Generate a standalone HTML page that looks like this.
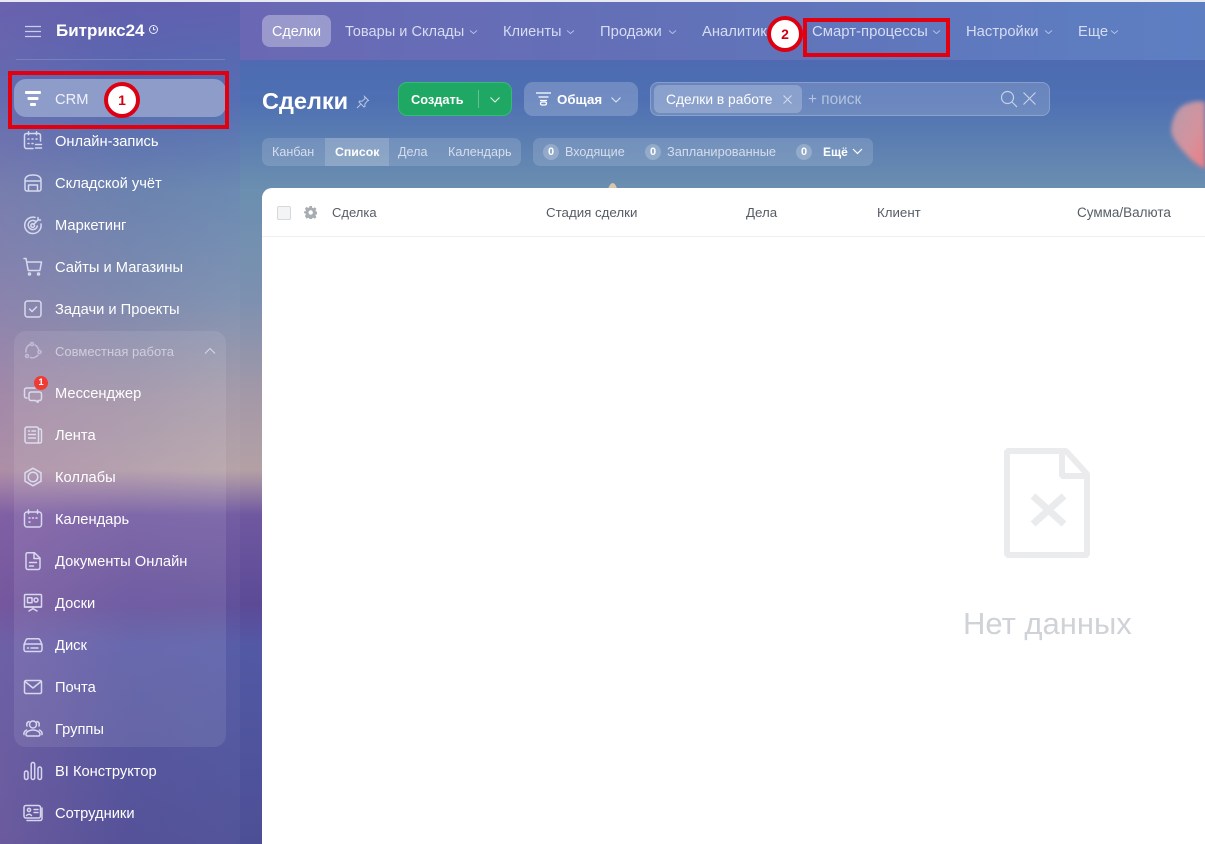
<!DOCTYPE html>
<html lang="ru"><head><meta charset="utf-8"><title>Сделки</title>
<style>
*{box-sizing:border-box}
html,body{margin:0;padding:0;width:1205px;height:844px;overflow:hidden;background:#5a62ab;font-family:"Liberation Sans","Noto Sans CJK SC",sans-serif}
.a{position:absolute}
#bg{left:0;top:0;width:1205px;height:844px;background:linear-gradient(180deg,#5f5fae 0,#4d6cb2 70px,#4e70b3 100px,#6b8fb0 190px,#7d90b0 300px,#a599a7 400px,#b3a0a5 470px,#a48ea4 482px,#6f58a0 515px,#5c4a97 605px,#5358a5 645px,#5056a0 700px,#4d4f96 844px)}
#sb{left:0;top:0;width:240px;height:844px;background:linear-gradient(90deg,rgba(160,110,170,.36) 0,rgba(140,100,170,.12) 55%,rgba(255,255,255,.03) 100%);}
#sb2{left:0;top:0;width:240px;height:844px;background:linear-gradient(180deg,rgba(95,95,175,.55) 0,rgba(90,100,175,.3) 120px,rgba(0,0,0,0) 300px,rgba(0,0,0,0) 844px)}
#tb{left:240px;top:0;width:965px;height:60px;background:linear-gradient(90deg,#6a68b4 0,#6271b8 45%,#5d7fc2 100%)}
#topl{left:0;top:0;width:1205px;height:2px;background:#e9e9f3}
.it{position:absolute;left:55px;color:#fff;font-size:14.7px;line-height:20px;height:20px;white-space:nowrap;margin-top:1px}
.ic{position:absolute;left:23px;width:20px;height:20px;fill:none;stroke:#dfe2f4;stroke-width:1.5;stroke-linecap:round;stroke-linejoin:round;opacity:.92}
.tn{position:absolute;top:22px;height:20px;line-height:20px;font-size:14.8px;color:#d6dcf2;white-space:nowrap}
.ch{position:absolute;top:28px;width:9px;height:7px;fill:none;stroke:#b8c2e4;stroke-width:.9}
.seg{position:absolute;top:142px;height:20px;line-height:20px;font-size:12.6px;color:#d6deee;white-space:nowrap}
.cnt{position:absolute;top:144px;width:16px;height:16px;border-radius:50%;background:rgba(255,255,255,.22);color:#fff;font-size:11px;font-weight:bold;line-height:16px;text-align:center}
.th{position:absolute;top:203px;height:20px;line-height:20px;font-size:13.3px;color:#565c66;white-space:nowrap}
.red{position:absolute;border:4px solid #e2000f}
.num{position:absolute;width:36px;height:36px;border-radius:50%;background:#fff;border:4px solid #dc0012;color:#d00012;font-weight:bold;font-size:14px;line-height:28px;text-align:center}
</style></head><body>
<div class="a" id="bg"></div>
<svg class="a" style="left:1165px;top:95px;filter:blur(2px)" width="40" height="80"><defs><linearGradient id="bl" x1="0" y1="0" x2="1" y2="1"><stop offset="0" stop-color="#b79bae"/><stop offset=".6" stop-color="#d4929c"/><stop offset="1" stop-color="#ee7c82"/></linearGradient></defs><path fill="url(#bl)" d="M6 36Q8 12 24 8Q33 5 40 7V74Q28 68 20 58Q8 46 6 36Z"/></svg>
<svg class="a" style="left:605px;top:182px" width="14" height="7"><path fill="#d8c7ac" d="M3 7Q5 1 8 1Q11 2 12 7Z"/></svg>
<div class="a" id="sb"></div>
<div class="a" id="sb2"></div>
<div class="a" id="tb"></div>
<div class="a" id="topl"></div>

<svg class="a" style="left:25px;top:25px" width="17" height="13" fill="none" stroke="#c9cfe9" stroke-width="1.3"><path d="M0 1.5h16M0 6.5h16M0 11.5h16"/></svg>
<div class="a" style="left:56px;top:20px;color:#fff;font-weight:bold;font-size:17px;line-height:22px">Битрикс24</div>
<svg class="a" style="left:148px;top:24px" width="11" height="11" fill="none" stroke="#e8ebf8" stroke-width="1"><circle cx="5.5" cy="5.5" r="4"/><path d="M5.5 3v2.7h2"/></svg>
<div class="a" style="left:16px;top:59px;width:209px;height:1px;background:rgba(255,255,255,.16)"></div>

<div class="a" style="left:14px;top:79px;width:212px;height:38px;border-radius:12px;background:#8e9cc9"></div>
<div class="a" style="left:14px;top:331px;width:212px;height:416px;border-radius:12px;background:rgba(255,255,255,.09)"></div>

<svg class="a" style="left:24px;top:90px" width="18" height="17" fill="#fff"><rect x="1" y="1" width="16" height="3" rx="1"/><rect x="3.5" y="7" width="11" height="3" rx="1"/><rect x="6" y="13" width="6" height="3" rx="1"/></svg>
<div class="it" style="top:89px;color:#f0f2fb">CRM</div>

<svg class="ic" style="top:131px" viewBox="0 0 20 20"><path d="M10 17.500H3.500a2 2 0 0 1-2-2V4.500a2 2 0 0 1 2-2h12a2 2 0 0 1 2 2V10M5.500.8v3M13.500.8v3M5 8h1M9 8h1M13 8h1M5 12.500h1M9 12.500h1M12.500 13.500h6M12.500 17h6"/></svg>
<div class="it" style="top:131px">Онлайн-запись</div>

<svg class="ic" style="top:173px" viewBox="0 0 20 20"><path d="M2 16V7.500Q2 2 10 2t8 5.500V16a2 2 0 0 1-2 2H4a2 2 0 0 1-2-2ZM2 8h16M5.500 18v-6h9v6M5.500 12h9"/></svg>
<div class="it" style="top:173px">Складской учёт</div>

<svg class="ic" style="top:215px" viewBox="0 0 20 20"><path d="M12 2.400A8.200 8.200 0 1 0 18 9M13 6.700A4.600 4.600 0 1 0 14.300 11M10 8.800 a1.800 1.800 0 1 0 1.400 1.400M10.500 9.500l5-5M15 2.500v2.500h2.500"/></svg>
<div class="it" style="top:215px">Маркетинг</div>

<svg class="ic" style="top:257px" viewBox="0 0 20 20"><path d="M1 1.500h2l2.200 12h11.500M3.700 5H18.500l-1.500 8"/><circle cx="6.500" cy="17" r="1"/><circle cx="15.500" cy="17" r="1"/></svg>
<div class="it" style="top:257px">Сайты и Магазины</div>

<svg class="ic" style="top:299px" viewBox="0 0 20 20"><rect x="2" y="2" width="16" height="16" rx="2.500"/><path d="M6.500 10l2.500 2.500 4.500-4.500"/></svg>
<div class="it" style="top:299px">Задачи и Проекты</div>

<svg class="ic" style="top:341px;opacity:.55" viewBox="0 0 20 20"><circle cx="9" cy="3" r="1.500"/><circle cx="4" cy="15" r="1.500"/><circle cx="16.500" cy="11" r="1.500"/><path d="M6.500 3.700A7 7 0 0 0 3 11M12 4a7 7 0 0 1 3.500 4.500M15 14a7 7 0 0 1-7.500 2.500"/></svg>
<div class="it" style="top:341px;font-size:13px;color:#d0cddd">Совместная работа</div>
<svg class="a" style="left:204px;top:347px" width="12" height="8" fill="none" stroke="#d8d6e4" stroke-width="1.1"><path d="M1 6.500 6 1.500l5 5"/></svg>

<svg class="ic" style="top:383px" viewBox="0 0 20 20"><path d="M4 15H3.500a2 2 0 0 1-2-2V7a2 2 0 0 1 2-2H12"/><path d="M8 9h8.500a2 2 0 0 1 2 2v4.500a2 2 0 0 1-2 2H15v2l-2.500-2H8a2 2 0 0 1-2-2V11a2 2 0 0 1 2-2Z"/></svg>
<div class="a" style="left:34px;top:376px;width:14px;height:14px;border-radius:50%;background:#ef3b33;color:#fff;font-size:9.500px;font-weight:bold;text-align:center;line-height:14px">1</div>
<div class="it" style="top:383px">Мессенджер</div>

<svg class="ic" style="top:425px" viewBox="0 0 20 20"><rect x="2" y="2" width="13.500" height="16" rx="2"/><path d="M15.500 4H17a1.500 1.500 0 0 1 1.500 1.500V16.500A1.500 1.500 0 0 1 17 18h-2M5.500 6h1M9 6h3.500M5.500 9.500h7M5.500 13h7"/></svg>
<div class="it" style="top:425px">Лента</div>

<svg class="ic" style="top:467px" viewBox="0 0 20 20"><path d="M10 1.200 18 5.800v8.400l-8 4.600-8-4.600V5.800Z"/><circle cx="10" cy="10" r="4.800"/></svg>
<div class="it" style="top:467px">Коллабы</div>

<svg class="ic" style="top:509px" viewBox="0 0 20 20"><rect x="1.500" y="3" width="17" height="15" rx="2.500"/><path d="M5.500 1v3.500M14.500 1v3.500M6 9h1M9.500 9h1M13 9h1M6 13h1"/></svg>
<div class="it" style="top:509px">Календарь</div>

<svg class="ic" style="top:551px" viewBox="0 0 20 20"><path d="M4 1.800h7.500L17 7v9.500a2 2 0 0 1-2 2H5a2 2 0 0 1-2-2V3a1.500 1.500 0 0 1 1-1.200ZM11 2v5.500h6M6.500 11.500h7M6.500 15h4"/></svg>
<div class="it" style="top:551px">Документы Онлайн</div>

<svg class="ic" style="top:593px" viewBox="0 0 20 20"><rect x="1.500" y="1.500" width="17" height="12.500" rx="1"/><rect x="4.500" y="4.800" width="4.500" height="5"/><circle cx="13" cy="7" r="2"/><path d="M1.500 14h17M10 14v2M6 18l4-2.500 4 2.500"/></svg>
<div class="it" style="top:593px">Доски</div>

<svg class="ic" style="top:635px" viewBox="0 0 20 20"><path d="M1 9.500l2-4.500a2 2 0 0 1 2-1.300h10A2 2 0 0 1 17 5l2 4.500"/><rect x="1" y="9" width="18" height="7.500" rx="2"/><path d="M4.500 13h1M8 13h7"/></svg>
<div class="it" style="top:635px">Диск</div>

<svg class="ic" style="top:677px" viewBox="0 0 20 20"><rect x="1.500" y="3.500" width="17" height="13" rx="1.500"/><path d="M2 4.500l8 6.500 8-6.500"/></svg>
<div class="it" style="top:677px">Почта</div>

<svg class="ic" style="top:719px" viewBox="0 0 20 20"><circle cx="10" cy="5.500" r="3.500"/><path d="M6 2.500Q3 3.500 4 7M14 2.500Q17 3.500 16 7M5.500 12q4.500-2 9 0 2.500 1 2.500 3.500a1.500 1.500 0 0 1-1.500 1.500h-11A1.500 1.500 0 0 1 3 15.500Q3 13 5.500 12ZM3.500 11Q.5 12.500 1 15.500M16.500 11q3 1.500 2.500 4.500"/></svg>
<div class="it" style="top:719px">Группы</div>

<svg class="ic" style="top:761px" viewBox="0 0 20 20"><rect x="1.500" y="10" width="3.500" height="8.500" rx="1.700"/><rect x="8.200" y="1.500" width="3.500" height="17" rx="1.700"/><rect x="15" y="6" width="3.500" height="12.500" rx="1.700"/></svg>
<div class="it" style="top:761px">BI Конструктор</div>

<svg class="ic" style="top:803px" viewBox="0 0 20 20"><rect x="1" y="2.500" width="16.500" height="12.500" rx="2"/><circle cx="6" cy="7" r="1.600"/><path d="M3.500 12.500q2.500-2.500 5 0M11 6.500h4M11 9.500h4M19 5v10.500a2 2 0 0 1-2 2H4"/></svg>
<div class="it" style="top:803px">Сотрудники</div>

<div class="red" style="left:8px;top:71px;width:221px;height:58px"></div>
<div class="num" style="left:104px;top:82px">1</div>

<!-- top nav -->
<div class="a" style="left:262px;top:15px;width:69px;height:32px;border-radius:8px;background:rgba(255,255,255,.32)"></div>
<div class="tn" style="left:272px;color:#fff;font-size:14.4px">Сделки</div>
<div class="tn" style="left:345px;font-size:14.6px">Товары и Склады</div>
<svg class="ch" style="left:469px"><path d="M1 2.500l3.500 3L8 2.500"/></svg>
<div class="tn" style="left:503px;font-size:14.6px">Клиенты</div>
<svg class="ch" style="left:566px"><path d="M1 2.500l3.500 3L8 2.500"/></svg>
<div class="tn" style="left:600px">Продажи</div>
<svg class="ch" style="left:668px"><path d="M1 2.500l3.500 3L8 2.500"/></svg>
<div class="tn" style="left:702px">Аналитика</div>
<div class="tn" style="left:812px;font-size:14.9px">Смарт-процессы</div>
<svg class="ch" style="left:932px"><path d="M1 2.500l3.500 3L8 2.500"/></svg>
<div class="tn" style="left:966px">Настройки</div>
<svg class="ch" style="left:1044px"><path d="M1 2.500l3.500 3L8 2.500"/></svg>
<div class="tn" style="left:1078px">Еще</div>
<svg class="ch" style="left:1110px"><path d="M1 2.500l3.500 3L8 2.500"/></svg>
<div class="red" style="left:803px;top:18px;width:147px;height:39px"></div>
<div class="num" style="left:767px;top:16px">2</div>

<!-- toolbar -->
<div class="a" style="left:262px;top:85px;color:#fff;font-weight:bold;font-size:23.5px;line-height:32px">Сделки</div>
<svg class="a" style="left:356px;top:95px" width="14" height="14" fill="none" stroke="#b9c6e4" stroke-width="1"><path d="M8.500 1.500l4 4-1.200.5-2.500 3 .2 2.500-1 .5-5-5 .5-1 2.500.2 3-2.500ZM4.800 9.200 1 13"/></svg>
<div class="a" style="left:398px;top:82px;width:114px;height:34px;border-radius:9px;background:#1fa863;border:1px solid #39b878"></div>
<div class="a" style="left:411px;top:90px;color:#fff;font-weight:bold;font-size:12.800px;line-height:20px">Создать</div>
<div class="a" style="left:478px;top:90px;width:1px;height:18px;background:rgba(255,255,255,.3)"></div>
<svg class="a" style="left:489px;top:96px" width="12" height="8" fill="none" stroke="#e3f5eb" stroke-width="1.100"><path d="M1.500 1.500 6 6l4.500-4.500"/></svg>
<div class="a" style="left:524px;top:82px;width:114px;height:34px;border-radius:9px;background:rgba(255,255,255,.2)"></div>
<svg class="a" style="left:535px;top:91px" width="17" height="16" fill="none" stroke="#fff" stroke-width="1.300"><path d="M1 2h15M3.500 6h10M5 9.500h7"/><rect x="5.500" y="11" width="6" height="3" rx="1.500"/></svg>
<div class="a" style="left:557px;top:90px;color:#fff;font-weight:bold;font-size:13.300px;line-height:20px">Общая</div>
<svg class="a" style="left:610px;top:96px" width="12" height="8" fill="none" stroke="#dfe6f5" stroke-width="1.100"><path d="M1.500 1.500 6 6l4.500-4.500"/></svg>
<div class="a" style="left:650px;top:82px;width:400px;height:34px;border-radius:8px;background:rgba(255,255,255,.16);border:1px solid rgba(255,255,255,.2)"></div>
<div class="a" style="left:654px;top:85px;width:148px;height:28px;border-radius:6px;background:rgba(255,255,255,.22)"></div>
<div class="a" style="left:666px;top:90px;color:#fff;font-size:13.800px;line-height:20px;white-space:nowrap">Сделки в работе</div>
<svg class="a" style="left:783px;top:95px" width="9" height="9" fill="none" stroke="#d5dcef" stroke-width="1"><path d="M.5.500l8 8M8.500.500l-8 8"/></svg>
<div class="a" style="left:808px;top:90px;color:#b5c4de;font-size:15.400px;line-height:20px;white-space:nowrap">+ поиск</div>
<svg class="a" style="left:1000px;top:90px" width="18" height="18" fill="none" stroke="#c6d1e6" stroke-width="1.200"><circle cx="7.500" cy="7.500" r="6"/><path d="M12 12l5 5"/></svg>
<svg class="a" style="left:1023px;top:92px" width="13" height="13" fill="none" stroke="#c6d1e6" stroke-width="1.200"><path d="M.5.500l12 12M12.500.500l-12 12"/></svg>

<!-- segs -->
<div class="a" style="left:262px;top:138px;width:259px;height:28px;border-radius:7px;background:rgba(255,255,255,.14)"></div>
<div class="a" style="left:325px;top:138px;width:64px;height:28px;background:rgba(255,255,255,.16)"></div>
<div class="seg" style="left:272px">Канбан</div>
<div class="seg" style="left:335px;color:#fff;font-weight:bold;font-size:12.300px">Список</div>
<div class="seg" style="left:398px">Дела</div>
<div class="seg" style="left:448px">Календарь</div>
<div class="a" style="left:533px;top:138px;width:340px;height:28px;border-radius:7px;background:rgba(255,255,255,.14)"></div>
<div class="cnt" style="left:543px">0</div>
<div class="seg" style="left:565px">Входящие</div>
<div class="cnt" style="left:645px">0</div>
<div class="seg" style="left:667px;font-size:12.800px">Запланированные</div>
<div class="cnt" style="left:796px">0</div>
<div class="seg" style="left:823px;color:#fff;font-weight:bold;font-size:12px">Ещё</div>
<svg class="a" style="left:852px;top:148px" width="11" height="7" fill="none" stroke="#fff" stroke-width="1.200"><path d="M1 1l4.500 4.500L10 1"/></svg>

<!-- table -->
<div class="a" style="left:262px;top:188px;width:943px;height:656px;background:#fff;border-radius:10px 0 0 0"></div>
<div class="a" style="left:262px;top:236px;width:943px;height:1px;background:#edeef0"></div>
<div class="a" style="left:277px;top:206px;width:14px;height:14px;background:#f3f4f5;border:1px solid #d5d8dc;border-radius:2px"></div>
<svg class="a" style="left:304px;top:206px" width="13" height="13" viewBox="-.5 0 13 13"><path fill="#a8adb4" fill-rule="evenodd" d="M5 0h2.400l.3 1.700 1.100.5 1.500-1 1.700 1.700-1 1.500.5 1.100 1.700.3v2.400l-1.700.3-.5 1.100 1 1.500-1.700 1.700-1.500-1-1.100.5-.3 1.700H5l-.3-1.800-1.100-.5-1.500 1L.4 10l1-1.500-.5-1.100L-.8 7V5.500l1.700-.3.5-1.100-1-1.500L2.100.9l1.500 1 1.100-.3ZM6.200 4.300a2.200 2.200 0 1 0 0 4.400 2.200 2.200 0 0 0 0-4.400Z"/></svg>
<div class="th" style="left:332px;font-size:13px">Сделка</div>
<div class="th" style="left:546px">Стадия сделки</div>
<div class="th" style="left:746px">Дела</div>
<div class="th" style="left:877px">Клиент</div>
<div class="th" style="left:1077px;font-size:13.500px">Сумма/Валюта</div>

<svg class="a" style="left:1003px;top:447px" width="88" height="112" fill="none" stroke="#e9ebed" stroke-width="6" stroke-linejoin="bevel"><path d="M4 4h59l21 23v81H4Z"/><path d="M59 4v25h25"/><path d="M30 49l31 28M61 49L30 77" stroke-width="7"/></svg>
<div class="a" style="left:963px;top:606px;color:#cfd2d6;font-size:31px;line-height:36px;white-space:nowrap">Нет данных</div>
</body></html>
